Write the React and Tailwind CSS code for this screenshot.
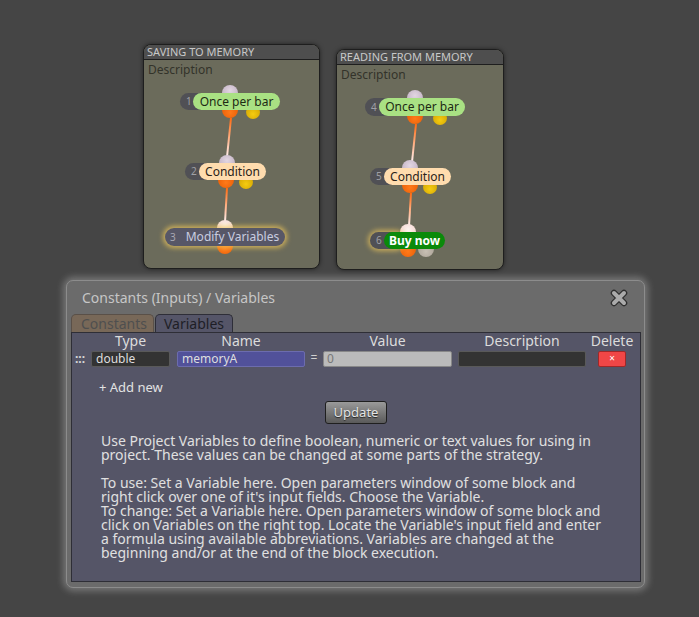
const ORANGE = 'bg-[radial-gradient(circle_at_50%_65%,#ff7a1a,#e25500)]';
const YELLOW = 'bg-[radial-gradient(circle_at_50%_65%,#f5cc10,#c99a00)]';
const MAUVE = 'bg-[radial-gradient(circle_at_50%_35%,#e2d6e2,#b7a5b9)]';
const PINK = 'bg-[radial-gradient(circle_at_50%_35%,#fff4f0,#f0c8c4)]';
const GRAY = 'bg-[radial-gradient(circle_at_50%_65%,#c8c0b4,#9f978c)]';

const cards = [
  {
    id: 'c1',
    title: 'SAVING TO MEMORY',
    x: 143,
    y: 44,
    w: 177,
    h: 225,
    nodes: [
      {
        num: '1', nx: 180, y: 93, h: 17, lx: 193, lw: 87, label: 'Once per bar',
        labelCls: 'bg-[#a9e183] text-[#1d2a14]',
        top: { cx: 230, d: 16, cls: MAUVE },
        bottom: [{ cx: 230, d: 16, cls: ORANGE }, { cx: 253, d: 14, off: 2, cls: YELLOW }],
      },
      {
        num: '2', nx: 185, y: 163, h: 17, lx: 199, lw: 67, label: 'Condition',
        labelCls: 'bg-[#ffdcae] text-[#2a2218]',
        top: { cx: 227, d: 16, cls: MAUVE },
        bottom: [{ cx: 226, d: 16, cls: ORANGE }, { cx: 246, d: 14, off: 2, cls: YELLOW }],
      },
      {
        num: '3', nx: 165, y: 228, h: 18, nw: 120, label: 'Modify Variables', single: true,
        top: { cx: 225, d: 16, cls: PINK },
        bottom: [{ cx: 225, d: 16, cls: ORANGE }],
      },
    ],
    lines: [
      [230, 117, 226, 156],
      [226, 187, 224, 221],
    ],
  },
  {
    id: 'c2',
    title: 'READING FROM MEMORY',
    x: 336,
    y: 49,
    w: 168,
    h: 221,
    nodes: [
      {
        num: '4', nx: 365, y: 98, h: 18, lx: 379, lw: 86, label: 'Once per bar',
        labelCls: 'bg-[#a9e183] text-[#1d2a14]',
        top: { cx: 415, d: 16, cls: MAUVE },
        bottom: [{ cx: 415, d: 16, cls: ORANGE }, { cx: 440, d: 14, off: 2, cls: YELLOW }],
      },
      {
        num: '5', nx: 370, y: 168, h: 17, lx: 384, lw: 67, label: 'Condition',
        labelCls: 'bg-[#ffdcae] text-[#2a2218]',
        top: { cx: 410, d: 16, cls: MAUVE },
        bottom: [{ cx: 410, d: 16, cls: ORANGE }, { cx: 430, d: 14, off: 2, cls: YELLOW }],
      },
      {
        num: '6', nx: 370, y: 232, h: 17, lx: 384, lw: 61, label: 'Buy now', glow: true,
        labelCls: 'bg-[#0a8a0a] text-white font-bold',
        top: { cx: 408, d: 16, cls: PINK },
        bottom: [{ cx: 408, d: 16, cls: ORANGE }, { cx: 426, d: 16, cls: GRAY }],
      },
    ],
    lines: [
      [415, 123, 411, 161],
      [410, 192, 408, 225],
    ],
  },
];

function Dot({ cx, cy, d, cls, ox, oy }) {
  return (
    <div
      className={`absolute rounded-full ${cls}`}
      style={{ left: cx - d / 2 - ox, top: cy - d / 2 - oy, width: d, height: d }}
    />
  );
}

function FlowNode({ n, ox, oy }) {
  return (
    <>
      <Dot {...n.top} cy={n.y} ox={ox} oy={oy} />
      {n.bottom.map((b, i) => (
        <Dot key={i} {...b} cy={n.y + n.h + (b.off || 0)} ox={ox} oy={oy} />
      ))}
      {n.single ? (
        <div
          className="absolute rounded-full bg-[#575767] flex items-center text-[12px] shadow-[0_0_5px_2px_rgba(240,200,90,0.75)]"
          style={{ left: n.nx - ox, top: n.y - oy, width: n.nw, height: n.h }}
        >
          <span className="pl-[5px] text-[10px] text-[#a9a9b4]">{n.num}</span>
          <span className="pl-[10px] text-[#c9cde0]">{n.label}</span>
        </div>
      ) : (
        <>
          <div
            className={`absolute rounded-full bg-[#505055] text-[10px] text-[#a0a0a6] pl-[6px] flex items-center ${n.glow ? 'shadow-[0_0_5px_2px_rgba(240,200,90,0.7)]' : ''}`}
            style={{ left: n.nx - ox, top: n.y - oy, width: n.lx - n.nx + 20, height: n.h }}
          >
            {n.num}
          </div>
          <div
            className={`absolute rounded-full flex items-center justify-center text-[12px] ${n.labelCls}`}
            style={{ left: n.lx - ox, top: n.y - oy, width: n.lw, height: n.h }}
          >
            {n.label}
          </div>
        </>
      )}
    </>
  );
}

function Card({ c }) {
  return (
    <div
      className="absolute rounded-[8px] border border-[#1e1e1e] bg-[#6b6b5b] overflow-hidden shadow-[0_0_4px_rgba(0,0,0,0.5)]"
      style={{ left: c.x, top: c.y, width: c.w, height: c.h }}
    >
      <div className="h-[15px] bg-[#4e4e4e] border-b border-[#1e1e1e] px-[3px] text-[11px] leading-[14px] text-[#c8c8c8] whitespace-nowrap">
        {c.title}
      </div>
      <div className="mt-[3px] px-[4px] text-[12px] leading-[14px] text-[#33332a]">Description</div>
      <svg className="absolute left-0 top-0" width={c.w} height={c.h}>
        <defs>
          {c.lines.map((l, i) => (
            <linearGradient
              key={i}
              id={`${c.id}g${i}`}
              gradientUnits="userSpaceOnUse"
              x1={l[0] - c.x}
              y1={l[1] - c.y}
              x2={l[2] - c.x}
              y2={l[3] - c.y}
            >
              <stop offset="0" stopColor="#ff6a10" />
              <stop offset="1" stopColor="#fff0f0" />
            </linearGradient>
          ))}
        </defs>
        {c.lines.map((l, i) => (
          <line
            key={i}
            x1={l[0] - c.x}
            y1={l[1] - c.y}
            x2={l[2] - c.x}
            y2={l[3] - c.y}
            stroke={`url(#${c.id}g${i})`}
            strokeWidth="2"
          />
        ))}
      </svg>
      {c.nodes.map((n) => (
        <FlowNode key={n.num} n={n} ox={c.x + 1} oy={c.y + 1} />
      ))}
    </div>
  );
}

function CloseIcon() {
  return (
    <svg width="18" height="18" viewBox="0 0 18 18">
      <path d="M4 4 L14 14 M14 4 L4 14" stroke="#2e2e2e" strokeWidth="6.5" strokeLinecap="round" />
      <path d="M4 4 L14 14 M14 4 L4 14" stroke="#aaaaaa" strokeWidth="4" strokeLinecap="round" />
    </svg>
  );
}

const help = [
  'Use Project Variables to define boolean, numeric or text values for using in',
  'project. These values can be changed at some parts of the strategy.',
  '',
  'To use: Set a Variable here. Open parameters window of some block and',
  "right click over one of it's input fields. Choose the Variable.",
  'To change: Set a Variable here. Open parameters window of some block and',
  "click on Variables on the right top. Locate the Variable's input field and enter",
  'a formula using available abbreviations. Variables are changed at the',
  'beginning and/or at the end of the block execution.',
];

export default function App() {
  return (
    <div className="w-[699px] h-[617px] bg-[#454545] overflow-hidden font-['Noto_Sans',sans-serif]">
      <div className="relative h-[280px]">
        {cards.map((c) => (
          <Card key={c.id} c={c} />
        ))}
      </div>

      {/* dialog */}
      <div className="ml-[66px] w-[579px] h-[308px] rounded-[7px] border border-[#8c8c8c] bg-[#6b6b6b] shadow-[0_0_7px_3px_rgba(235,235,235,0.3)] pl-[4px] pr-[3px] flex flex-col">
        <div className="h-[33px] flex items-center justify-between pl-[11px] pr-[13px]">
          <span className="text-[14px] text-[#c6c6c6]">Constants (Inputs) / Variables</span>
          <CloseIcon />
        </div>
        <div className="flex h-[18px] gap-[1px] text-[14px] leading-[17px]">
          <div className="w-[83px] rounded-t-[5px] border border-b-0 border-[#5a5048] bg-[#786858] text-[#4f4f4f] pl-[9px]">
            Constants
          </div>
          <div className="w-[78px] rounded-t-[5px] border border-b-0 border-[#2e2e38] bg-[#555568] text-[#1e1e26] pl-[8px]">
            Variables
          </div>
        </div>
        <div className="h-[250px] border border-[#2e2e36] bg-[#555567] text-[#dcdcdc]">
          <div className="flex h-[17px] text-[14px] leading-[14px] pt-[1px]">
            <div className="w-[19px]" />
            <div className="w-[79px] text-center">Type</div>
            <div className="w-[7px]" />
            <div className="w-[128px] text-center">Name</div>
            <div className="w-[18px]" />
            <div className="w-[129px] text-center">Value</div>
            <div className="w-[6px]" />
            <div className="w-[128px] text-center">Description</div>
            <div className="w-[4px]" />
            <div className="w-[44px] text-center">Delete</div>
          </div>
          <div className="flex h-[16px] mt-[1px] text-[12px] leading-[14px]">
            <div className="w-[19px] pl-[3px] text-[#d8d8d8] font-bold leading-[15px]">:::</div>
            <div className="w-[79px] rounded-[2px] border border-[#595959] bg-[#333333] pl-[4px] text-[#dedede]">double</div>
            <div className="w-[7px]" />
            <div className="w-[128px] rounded-[2px] border border-[#6c6cae] bg-[#51519a] pl-[4px] text-[#dedede]">memoryA</div>
            <div className="w-[18px] text-center text-[#d0d0d0]">=</div>
            <div className="w-[129px] rounded-[2px] border border-[#888] bg-[#bbbbbb] pl-[3px] text-[#777]">0</div>
            <div className="w-[6px]" />
            <div className="w-[128px] rounded-[2px] border border-[#595959] bg-[#333333]" />
            <div className="w-[4px]" />
            <div className="w-[44px] flex justify-center">
              <div className="w-[28px] h-[16px] rounded-[2px] border border-[#a02828] bg-[#f04646] text-white text-[10px] leading-[13px] text-center">
                ×
              </div>
            </div>
          </div>
          <div className="mt-[12px] pl-[27px] text-[13px] leading-[17px] text-[#e2e2e2]">+ Add new</div>
          <div className="mt-[5px] flex justify-center">
            <button className="w-[62px] h-[23px] rounded-[3px] border border-[#1f1f1f] bg-gradient-to-b from-[#9a9a9a] to-[#5a5a5a] text-[13px] text-[#e4e4e4] [text-shadow:0_1px_1px_#222]">
              Update
            </button>
          </div>
          <div className="mt-[10px] pl-[29px] text-[14px] leading-[14px] text-[#e0e0e0] whitespace-nowrap">
            {help.map((t, i) => (
              <div key={i} className="h-[14px]">
                {t}
              </div>
            ))}
          </div>
        </div>
      </div>
    </div>
  );
}
